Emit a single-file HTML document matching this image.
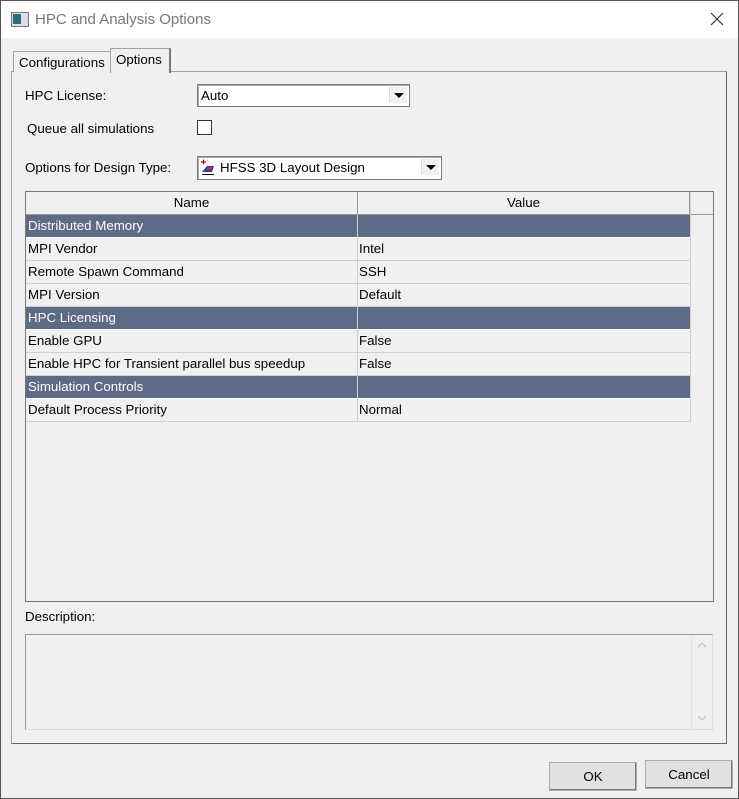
<!DOCTYPE html><html><head><style>
body{margin:0;width:739px;height:799px;position:relative;background:#f0f0f0;font-family:"Liberation Sans",sans-serif;font-size:13.3px;color:#000;overflow:hidden}
.a{position:absolute}
.win{left:0;top:0;width:737px;height:797px;border:1px solid #555}
.title{left:1px;top:1px;width:737px;height:37px;background:#fff}
.tab{border:1px solid #a0a0a0;border-bottom:none;background:#f0f0f0}
.combo{background:#fff;border:1px solid #7a7a7a;box-shadow:inset 1px 1px 0 #aaa}
.arr{position:absolute;right:2px;top:2px;width:17px;height:16px;background:#f0f0f0;border-left:1px solid #ddd}
.arr:after{content:"";position:absolute;left:4px;top:6px;border-left:5px solid transparent;border-right:5px solid transparent;border-top:5px solid #000}
.row{position:absolute;left:0;width:664px;height:22px;border-bottom:1px solid #d0d0d0;line-height:22px}
.row span{position:absolute;left:2px}
.row span+span{left:333px}
.row i{position:absolute;left:331px;top:0;height:23px;border-left:1px solid #d0d0d0}
.g{background:#5d6b87;color:#fff;border-bottom:1px solid #fff}
.btn{border:1px solid #adadad;background:#e1e1e1;text-align:center;box-shadow:inset -1px -1px 0 #777}
</style></head><body>
<div class="a win"></div>
<div class="a title"></div>
<div class="a" style="left:11px;top:12px;width:16px;height:13px;border:1px solid #777;background:#dde">
<div class="a" style="left:1px;top:1px;width:8px;height:10px;background:#2a6e7a"></div></div>
<div class="a" style="left:35px;top:11px;font-size:15px;color:#777">HPC and Analysis Options</div>
<svg class="a" style="left:710px;top:12px" width="14" height="14"><path d="M1 1L13 13M13 1L1 13" stroke="#333" stroke-width="1.2"/></svg>
<div class="a" style="left:11px;top:71px;width:714px;height:671px;border:1px solid #a0a0a0;border-right-color:#666;border-bottom-color:#666"></div>
<div class="a tab" style="left:13px;top:51px;width:96px;height:20px"><div class="a" style="left:5px;top:3px">Configurations</div></div>
<div class="a tab" style="left:110px;top:48px;width:58px;height:24px;border-right:2px solid #777"><div class="a" style="left:5px;top:3px">Options</div></div>
<div class="a" style="left:25px;top:88px">HPC License:</div>
<div class="a combo" style="left:197px;top:84px;width:211px;height:21px"><div class="a" style="left:3px;top:3px">Auto</div><div class="arr"></div></div>
<div class="a" style="left:27px;top:121px">Queue all simulations</div>
<div class="a" style="left:197px;top:120px;width:13px;height:13px;background:#fff;border:1px solid #333"></div>
<div class="a" style="left:25px;top:160px">Options for Design Type:</div>
<div class="a combo" style="left:197px;top:156px;width:243px;height:22px"><div class="a" style="left:2px;top:2px;width:16px;height:16px">
<svg width="16" height="17"><path d="M1 3H6M3.5 0.5V5.5" stroke="#c00" stroke-width="1.2"/><path d="M2 13 L7 7 L14 7 L12 13Z" fill="#1a3fc0"/><path d="M6 11 L8 8 L13 8 L11 11Z" fill="#e02020"/><path d="M2 15.5 H14" stroke="#000"/></svg></div>
<div class="a" style="left:22px;top:3px">HFSS 3D Layout Design</div><div class="arr"></div></div>
<div class="a" style="left:25px;top:191px;width:687px;height:409px;border:1px solid #777;background:#f0f0f0">
<div class="a" style="left:0;top:0;width:687px;height:22px;border-bottom:1px solid #999">
<div class="a" style="left:0;top:0;width:331px;height:22px;border-right:1px solid #999;text-align:center;line-height:22px">Name</div>
<div class="a" style="left:332px;top:0;width:331px;height:22px;border-right:1px solid #999;text-align:center;line-height:22px">Value</div></div>
<div class="a" style="left:0;top:23px">
<div class="row g" style="top:0"><span>Distributed Memory</span><i></i></div>
<div class="row" style="top:23px"><span>MPI Vendor</span><span>Intel</span><i></i></div>
<div class="row" style="top:46px"><span>Remote Spawn Command</span><span>SSH</span><i></i></div>
<div class="row" style="top:69px"><span>MPI Version</span><span>Default</span><i></i></div>
<div class="row g" style="top:92px"><span>HPC Licensing</span><i></i></div>
<div class="row" style="top:115px"><span>Enable GPU</span><span>False</span><i></i></div>
<div class="row" style="top:138px"><span>Enable HPC for Transient parallel bus speedup</span><span>False</span><i></i></div>
<div class="row g" style="top:161px"><span>Simulation Controls</span><i></i></div>
<div class="row" style="top:184px"><span>Default Process Priority</span><span>Normal</span><i></i></div>
<div class="a" style="left:664px;top:-23px;height:230px;border-left:1px solid #d0d0d0"></div>
</div></div>
<div class="a" style="left:25px;top:609px">Description:</div>
<div class="a" style="left:25px;top:634px;width:686px;height:94px;border:1px solid #999;border-right-color:#ddd;border-bottom-color:#ddd">
<div class="a" style="right:0;top:0;width:20px;height:94px;border-left:1px solid #e4e4e4">
<svg class="a" style="left:5px;top:7px" width="10" height="6"><path d="M1 5L5 1L9 5" stroke="#bbb" fill="none"/></svg>
<svg class="a" style="left:5px;top:80px" width="10" height="6"><path d="M1 1L5 5L9 1" stroke="#bbb" fill="none"/></svg></div></div>
<div class="a btn" style="left:549px;top:762px;width:86px;height:27px;line-height:28px">OK</div>
<div class="a btn" style="left:645px;top:760px;width:86px;height:27px;line-height:27px">Cancel</div>
</body></html>
